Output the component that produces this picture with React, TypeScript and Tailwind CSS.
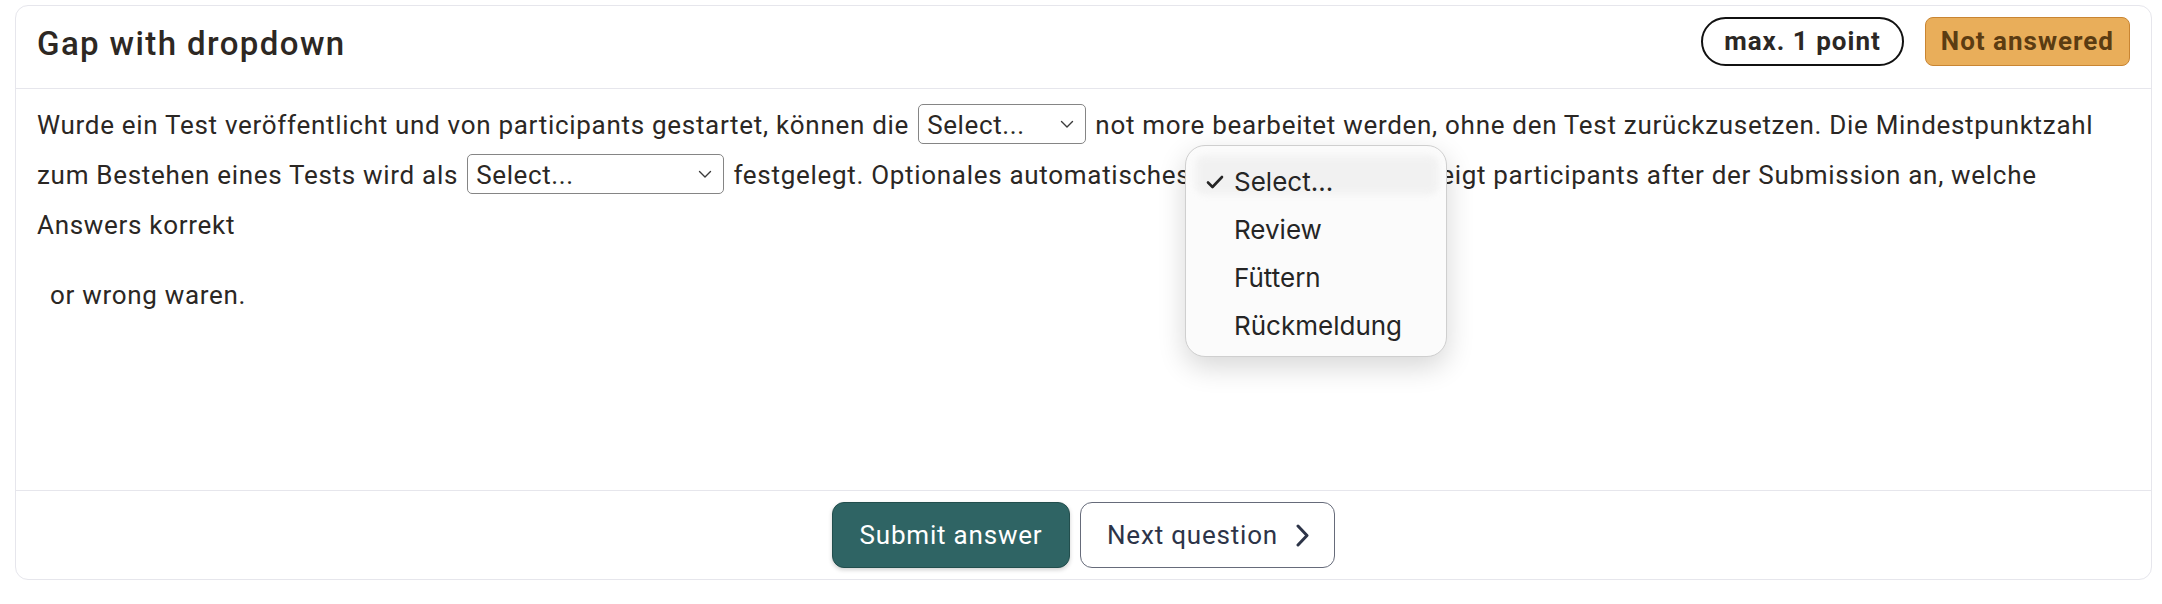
import React from "react";

function Chevron() {
  return (
    <svg width="14" height="9" viewBox="0 0 14 9" fill="none" className="shrink-0">
      <path d="M1.5 1.5 L7 7 L12.5 1.5" stroke="#3a3a3a" strokeWidth="1.4" strokeLinecap="round" strokeLinejoin="round" />
    </svg>
  );
}

function FakeSelect({ w }: { w: string }) {
  return (
    <span
      className={`mx-[2px] inline-flex h-[40px] items-center justify-between rounded-[5px] border border-[#858585] bg-white pl-[8px] pr-[11px] align-baseline tracking-normal ${w}`}
    >
      <span className="leading-[38px] pt-[2px] tracking-[0.6px]">Select...</span>
      <Chevron />
    </span>
  );
}

export default function App() {
  const sans = "font-['Roboto','Liberation_Sans',sans-serif]";
  return (
    <div className={`min-h-[604px] w-[2162px] bg-white pt-[5px] pl-[15px] ${sans}`}>
      <div className="relative flex h-[575px] w-[2137px] flex-col rounded-[13px] border border-[#e6e6ec] bg-white">
        {/* Header */}
        <div className="flex h-[83px] shrink-0 items-start justify-between border-b border-[#e6e6ec] px-[21px] pt-[11px]">
          <h2 className="mt-[2px] text-[33px] font-medium leading-[49px] tracking-[1.4px] text-[#2d2823]">
            Gap with dropdown
          </h2>
          <div className="flex items-center gap-[21px]">
            <span className="flex h-[49px] items-center rounded-full border-2 border-[#111] px-[21px] text-[26px] font-bold tracking-[1px] text-[#2b2724]">
              max. 1 point
            </span>
            <span className="flex h-[49px] items-center rounded-[8px] border-[1.5px] border-[#c98532] bg-[#e9ae5a] px-[15px] text-[26px] font-bold tracking-[1px] text-[#5b3c12]">
              Not answered
            </span>
          </div>
        </div>

        {/* Body */}
        <div className="flex-1 px-[21px] pt-[11px] text-[26px] leading-[50px] tracking-[0.7px] text-[#2b2724]">
          <p>
            Wurde ein Test veröffentlicht und von participants gestartet, können die{" "}
            <FakeSelect w="w-[168px]" /> not more bearbeitet werden, ohne den Test zurückzusetzen. Die
            Mindestpunktzahl zum Bestehen eines Tests wird als <FakeSelect w="w-[257px]" /> festgelegt.
            Optionales automatisches <FakeSelect w="w-[218px]" /> zeigt participants after der Submission an,
            welche Answers korrekt
          </p>
          <p className="mt-[20px] pl-[13px]">or wrong waren.</p>
        </div>

        {/* Footer */}
        <div className="flex h-[89px] shrink-0 items-start justify-center gap-[10px] border-t border-[#e6e6ec] pt-[11px]">
          <button className="flex h-[66px] w-[238px] items-center justify-center rounded-[12px] border border-[#224e4d] bg-[#2f6464] text-[26px] tracking-[0.8px] text-white shadow-[0_2px_4px_rgba(0,0,0,0.18)]">
            Submit answer
          </button>
          <button className="flex h-[66px] w-[255px] items-center justify-between rounded-[12px] border-[1.5px] border-[#666b7a] bg-white pl-[26px] pr-[25px] text-[26px] tracking-[0.8px] text-[#2d3448]">
            <span>Next question</span>
            <svg width="13" height="23" viewBox="0 0 13 23" fill="none">
              <path d="M2 2 L11 11.5 L2 21" stroke="#2d3448" strokeWidth="3" strokeLinecap="round" strokeLinejoin="round" />
            </svg>
          </button>
        </div>

        {/* Native select popup (open) */}
        <div className="absolute left-[1169px] top-[139px] h-[212px] w-[262px] rounded-[20px] border border-[#cfcfcf] bg-[#fbfbfb] pt-[12px] font-['Inter','Noto_Sans',sans-serif] text-[26px] leading-[48px] text-[#252525] shadow-[0_10px_28px_rgba(0,0,0,0.16)]">
          <div className="absolute left-[9px] top-[9px] h-[40px] w-[244px] rounded-[10px] bg-[#ececec] opacity-60 blur-[3px]" />
          <div className="relative flex items-center pl-[20px]">
            <svg width="18" height="14" viewBox="0 0 18 14" fill="none" className="mr-[10px]">
              <path d="M2 7.5 L6.5 12 L16 2" stroke="#252525" strokeWidth="2.6" strokeLinecap="round" strokeLinejoin="round" />
            </svg>
            <span>Select...</span>
          </div>
          <div className="relative pl-[48px]">Review</div>
          <div className="relative pl-[48px]">Füttern</div>
          <div className="relative pl-[48px]">Rückmeldung</div>
        </div>
      </div>
    </div>
  );
}
